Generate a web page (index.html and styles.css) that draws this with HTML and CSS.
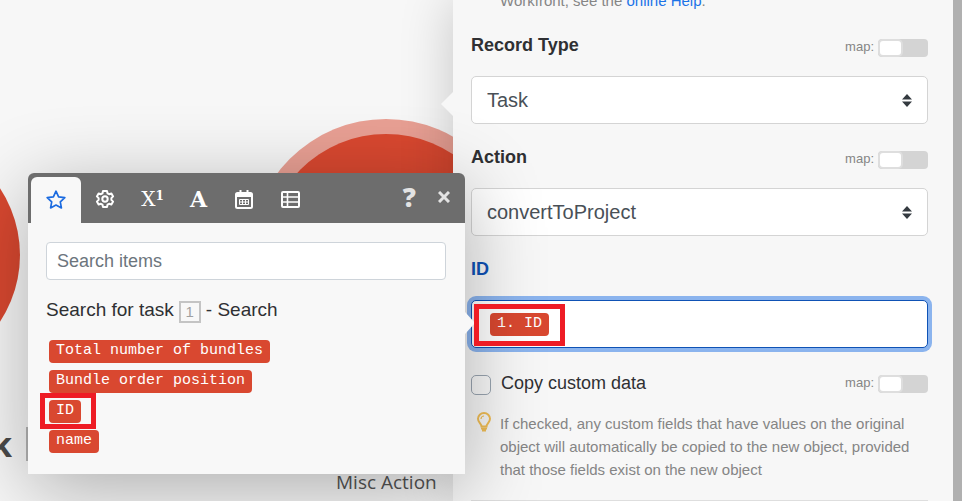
FILE: index.html
```html
<!DOCTYPE html>
<html lang="en">
<head>
<meta charset="utf-8">
<title>Scenario editor</title>
<link rel="stylesheet" href="styles.css">
</head>
<body>
<div class="editor">
  <main class="canvas">
    <div class="node node-left"></div>
    <div class="node node-right"></div>
    <div class="node-title"><b>k</b><span class="node-box"></span></div>
    <div class="node-caption">Misc Action</div>
  </main>

  <form class="panel">
    <p class="intro">Workfront, see the <a href="#help">online Help</a>.</p>

    <section class="field">
      <div class="field-head">
        <label class="field-label" for="record-type">Record Type</label>
        <label class="map">map: <input class="switch" type="checkbox"></label>
      </div>
      <div class="select">
        <select id="record-type"><option>Task</option></select>
        <svg width="10" height="13" viewBox="0 0 10 13"><path d="M5 0l5 5.500H0zM5 13l5-5.500H0z"/></svg>
      </div>
    </section>

    <section class="field">
      <div class="field-head">
        <label class="field-label" for="action">Action</label>
        <label class="map">map: <input class="switch" type="checkbox"></label>
      </div>
      <div class="select">
        <select id="action"><option>convertToProject</option></select>
        <svg width="10" height="13" viewBox="0 0 10 13"><path d="M5 0l5 5.500H0zM5 13l5-5.500H0z"/></svg>
      </div>
    </section>

    <section class="field">
      <div class="field-head">
        <label class="field-label active" for="object-id">ID</label>
      </div>
      <div class="token-field">
        <span class="pill marked marked-field">1. ID</span>
        <input id="object-id" type="text">
      </div>
    </section>

    <section class="option">
      <div class="field-head">
        <label class="check"><input type="checkbox">Copy custom data</label>
        <label class="map">map: <input class="switch" type="checkbox"></label>
      </div>
      <div class="hint">
        <svg width="14" height="20" viewBox="0 0 14 20" fill="none" stroke="#f0bd55" stroke-width="2"><path d="M4.500 14.500C4.500 11.500 1 10.500 1 6.800a6 5.800 0 0 1 12 0c0 3.700-3.500 4.700-3.500 7.700z"/><path d="M4 7a3 3 0 0 1 3-3" stroke-width="1.200"/><path d="M4 16.500h6M5 18.500h4"/></svg>
        <p>If checked, any custom fields that have values on the original object will automatically be copied to the new object, provided that those fields exist on the new object</p>
      </div>
    </section>
    <hr>
  </form>
  <div class="gutter"></div>

  <aside class="picker">
    <header class="picker-head">
      <button class="tab selected" aria-label="Favorites"><svg width="20" height="19" viewBox="0 0 20 19" fill="none" stroke="#1b6be0" stroke-width="1.700" stroke-linejoin="round"><path d="M10 1.200l2.600 5.600 6.200.8-4.500 4.200 1.100 6.100L10 15l-5.400 2.900 1.100-6.100L1.200 7.600l6.200-.8z"/></svg></button>
      <button class="tab" aria-label="General"><svg width="20" height="20" viewBox="0 0 20 20" fill="none" stroke="#fff" stroke-width="2" stroke-linejoin="round"><path d="M8 2h4l.5 2.300 1.600.9 2.300-.8 1.700 3-1.700 1.700v1.800l1.700 1.700-1.700 3-2.300-.8-1.600.9L12 18H8l-.5-2.300-1.600-.9-2.300.8-1.700-3 1.700-1.700V9.100L1.900 7.400l1.700-3 2.300.8 1.600-.9z"/><circle cx="10" cy="10" r="2.700"/></svg></button>
      <button class="tab tab-math" aria-label="Math">X<sup>1</sup></button>
      <button class="tab tab-text" aria-label="Text">A</button>
      <button class="tab" aria-label="Date"><svg width="18" height="19" viewBox="0 0 18 19" fill="none" stroke="#fff"><rect x="1" y="3" width="16" height="15" rx="1.500" stroke-width="2"/><path d="M1 5h16" stroke-width="4"/><path d="M5.500 0v4M12.500 0v4" stroke-width="2"/><path d="M4.500 9.500h9v5h-9zM4.500 12h9M7.500 9v6M10.500 9v6"/></svg></button>
      <button class="tab" aria-label="Array"><svg width="19" height="17" viewBox="0 0 19 17" fill="none" stroke="#fff"><rect x="1" y="1" width="17" height="15" rx="1" stroke-width="2"/><path d="M1 6h17M1 11h17M6.500 1v15" stroke-width="1.600"/></svg></button>
      <span class="spacer"></span>
      <button class="tool tool-help" aria-label="Help">?</button>
      <button class="tool" aria-label="Close"><svg width="12" height="12" viewBox="0 0 12 12" stroke="#e3e3e3" stroke-width="3"><path d="M1 1l10 10M11 1L1 11"/></svg></button>
    </header>
    <div class="picker-body">
      <input class="search" type="search" placeholder="Search items" aria-label="Search items">
      <h2 class="group">Search for task <span class="badge">1</span> - Search</h2>
      <ul class="items">
        <li><span class="pill">Total number of bundles</span></li>
        <li><span class="pill">Bundle order position</span></li>
        <li><span class="pill marked marked-item">ID</span></li>
        <li><span class="pill">name</span></li>
      </ul>
    </div>
  </aside>
</div>
</body>
</html>
```
FILE: styles.css
```css
* { box-sizing: border-box; }
body, p, h2, ul, hr { margin: 0; padding: 0; }
body {
  font-family: "Liberation Sans", Arial, sans-serif;
  color: #2f3033;
  background: #f7f7f7;
}
button, input, select { font: inherit; color: inherit; margin: 0; }

.editor {
  position: relative;
  display: grid;
  grid-template-columns: minmax(0, 1fr) 500px 9px;
  height: 100vh;
  overflow: hidden;
}

/* Canvas */
.canvas { position: relative; overflow: hidden; background: #f7f7f7; }
.node { position: absolute; width: 242px; height: 242px; border-radius: 50%; background: #d94830; }
.node-left { left: -222px; top: 134px; }
.node-right { left: 265px; top: 134px; box-shadow: 0 0 0 15px #e9a094; }
.node-title {
  position: absolute; left: -9px; top: 421px;
  display: flex; align-items: center; gap: 14px;
  font: 34px/46px "Open Sans", sans-serif;
  color: #4a4a4a;
}
.node-box { width: 30px; height: 34px; border: 2px solid #b5b5b5; }
.node-caption {
  position: absolute; left: 336px; top: 469px;
  font: 19px/26px "Open Sans", sans-serif;
  color: #555;
}

/* Settings panel */
.panel {
  position: relative;
  padding: 0 25px 0 18px;
  background: #f7f7f7;
  box-shadow: 0 0 50px rgba(0, 0, 0, .2);
}
.panel::before {
  content: "";
  position: absolute; left: -12px; top: 92px;
  border: solid transparent; border-width: 12px 12px 12px 0;
  border-right-color: #f7f7f7;
}
.gutter { background: #b0b0b0; z-index: 1; }
.intro { margin: -10px 0 22px 29px; font-size: 15px; line-height: 22px; color: #858585; }
.intro a { color: #1b73e8; text-decoration: none; }
.field { margin-bottom: 22px; }
.field-head { display: flex; justify-content: space-between; align-items: flex-start; }
.field-label { height: 42px; font-size: 18px; line-height: 22px; font-weight: bold; }
.field-label.active { color: #0f52b5; }
.map { display: flex; gap: 4px; height: 18px; margin-top: 5px; font-size: 13px; line-height: 16px; color: #858585; }
.switch {
  appearance: none;
  width: 50px; height: 18px; padding: 2px;
  border-radius: 4px; background: #d4d4d4;
}
.switch::before {
  content: ""; display: block; width: 21px; height: 14px;
  border-radius: 3px; background: #fff;
  box-shadow: 0 0 0 2px #dedede;
}
.select { position: relative; }
.select select {
  appearance: none; display: block;
  width: 100%; height: 48px; padding: 0 15px;
  border: 1px solid #d4d4d4; border-radius: 5px;
  background: #fff; font-size: 20px; color: #495057;
}
.select svg { position: absolute; right: 16px; top: 18px; fill: #343a40; pointer-events: none; }
.token-field {
  display: flex; align-items: center; gap: 16px;
  height: 48px; padding: 0 18px;
  border: 1px solid #0f52b5; border-radius: 5px;
  background: #fff;
  box-shadow: 0 0 0 4px #8bb4ee;
}
.token-field input { flex: 1; min-width: 0; border: 0; outline: 0; background: none; }
.option .check { display: flex; gap: 10px; font-size: 18px; line-height: 26px; }
.check input {
  appearance: none; width: 20px; height: 20px; margin-top: 5px;
  border: 1px solid #9aa5b1; border-radius: 5px; background: #f9f9f9;
}
.hint { display: flex; gap: 9px; margin: 16px 0 19px 6px; font-size: 15px; line-height: 23px; color: #858585; }
.hint svg { flex: none; }
hr { border: 0; border-top: 1px solid #dedede; }

/* Pills and their highlight frames */
.pill {
  display: inline-block; height: 23px; padding: 0 7px;
  border-radius: 4px; background: #d94830; color: #fff;
  font: 15px/22px "Liberation Mono", "Courier New", monospace;
}
.marked { position: relative; }
.marked::after { content: ""; position: absolute; border: 5px solid #ee1c25; z-index: 2; }
.marked-item::after { inset: -7px -15px -6px -9px; }
.marked-field::after { inset: -9px -16px -10px -16px; }

/* Item picker */
.picker {
  position: absolute; left: 28px; top: 173px;
  width: 437px;
  border-radius: 6px 6px 0 0;
  background: #f8f8f8;
  box-shadow: 0 16px 80px rgba(0, 0, 0, .3);
}
.picker::after {
  content: "";
  position: absolute; left: 100%; top: 139px;
  border: solid transparent; border-width: 11px 0 11px 10px;
  border-left-color: #f8f8f8;
}
.picker-head {
  display: flex; height: 50px; padding: 4px 12px 0 3px;
  border-radius: 6px 6px 0 0; background: #6d6d6d;
}
.tab, .tool {
  display: flex; align-items: center; justify-content: center;
  padding: 0 14px 2px; border: 0; background: none; color: #fff;
}
.tab.selected { width: 50px; border-radius: 6px 6px 0 0; background: #f8f8f8; }
.tab-math { width: 47px; font: 20px/24px "DejaVu Serif", serif; }
.tab-math sup { margin-bottom: 6px; font-size: 12px; line-height: 12px; font-weight: bold; }
.tab-text { width: 45px; font: bold 22px/24px "DejaVu Serif", serif; }
.spacer { flex: 1; }
.tool { height: 40px; padding: 0 3px; color: #e3e3e3; }
.tool-help { margin-right: 16px; font: 800 26px/26px "Open Sans", sans-serif; }
.picker-body { padding: 19px 19px 21px 18px; }
.search {
  display: block; width: 100%; height: 38px; padding: 0 10px;
  border: 1px solid #ced4da; border-radius: 4px;
  background: #fff; font-size: 18px;
}
.search::placeholder { color: #6c757d; opacity: 1; }
.group { display: flex; gap: 5px; margin: 19px 0 17px; font-size: 19px; line-height: 22px; font-weight: normal; }
.badge {
  width: 22px; height: 22px; margin-top: 2px;
  border: 2px solid #c4c4c4; color: #a0a0a0;
  font-size: 15px; line-height: 18px; text-align: center;
}
.items { display: grid; gap: 7px; padding-left: 3px; list-style: none; }
.items li { display: flex; }
```
